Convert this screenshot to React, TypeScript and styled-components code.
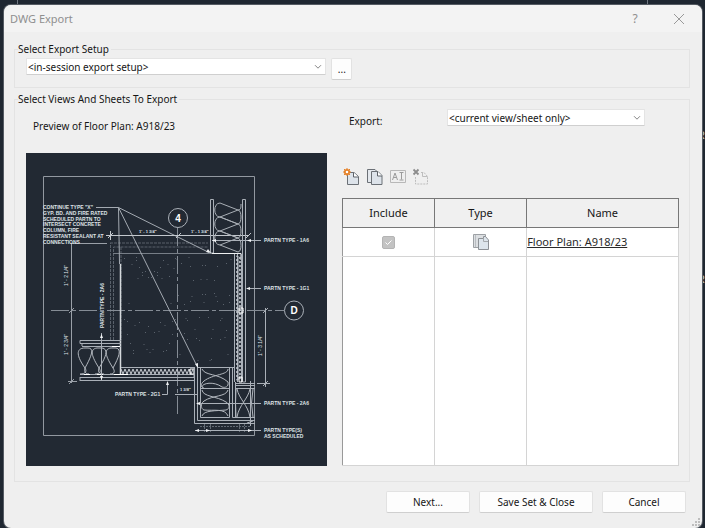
import React from "react";
import styled, { createGlobalStyle } from "styled-components";

const GlobalStyle = createGlobalStyle`
  *, *::before, *::after { box-sizing: border-box; }
  body {
    margin: 0;
    background: #1f2731;
    color: #161616;
    font-family: "Noto Sans", "Open Sans", sans-serif;
    font-size: 10px;
    line-height: 14px;
  }
  button, select { font: inherit; color: inherit; }
`;

const Desktop = styled.div`
  position: relative;
  display: flex;
  min-height: 100vh;
  padding: 5px 3px 2px 4px;
  overflow: hidden;
`;

const Backdrop = styled.svg`
  position: absolute;
  inset: 0;
  width: 100%;
  height: 100%;
`;

const Dialog = styled.main`
  position: relative;
  flex: 1;
  min-width: 0;
  display: flex;
  flex-direction: column;
  background: #efefef;
  border-radius: 7px;
  box-shadow: 0 0 0 1px #555b63;
  overflow: hidden;
`;

const TitleBar = styled.header`
  display: flex;
  align-items: center;
  height: 27px;
  padding: 0 15px 0 6px;
  background: #f3f3f3;
  color: #8f8f8f;
`;

const Title = styled.h1`
  flex: 1;
  margin: 0;
  font-size: 11px;
  font-weight: 400;
`;

const TitleButton = styled.button`
  display: grid;
  place-items: center;
  width: 16px;
  height: 20px;
  margin-left: 28px;
  padding: 0;
  border: 0;
  background: none;
  font-size: 12px;
`;

const Body = styled.form`
  flex: 1;
  display: flex;
  flex-direction: column;
  gap: 4px;
  padding: 10px 12px 15px 10px;
`;

const Group = styled.fieldset`
  min-width: 0;
  margin: 0;
  padding: 0 10px 0 3px;
  border: 1px solid #e3e3e3;
`;

const Legend = styled.legend`
  padding: 0 2px 0 0;
`;

const SetupRow = styled.div`
  display: flex;
  align-items: flex-start;
  gap: 5px;
  padding: 2px 0 7px 8px;
`;

const SelectBox = styled.span<{ $width: string }>`
  display: grid;
  width: ${(p) => p.$width};
  align-items: center;

  > * { grid-area: 1 / 1; }
  > svg { justify-self: end; margin-right: 4px; pointer-events: none; }
`;

const Select = styled.select`
  appearance: none;
  width: 100%;
  height: 17px;
  padding: 0 16px 0 1px;
  border: 1px solid #e4e4e4;
  border-bottom-color: #cfcfcf;
  border-radius: 1px;
  background: #fff;
`;

const Button = styled.button<{ $width: number }>`
  width: ${(p) => p.$width}px;
  height: 22px;
  padding: 0;
  border: 1px solid #e2e2e2;
  border-bottom-color: #cfcfcf;
  border-radius: 2px;
  background: #fdfdfd;
`;

const Columns = styled.div`
  display: grid;
  grid-template-columns: 301fr 337fr;
  gap: 15px;
  padding: 3px 0 15px 8px;
`;

const PreviewPane = styled.figure`
  margin: 0;
  min-width: 0;
`;

const PreviewCaption = styled.figcaption`
  padding: 10px 7px 20px;
`;

const Drawing = styled.svg`
  display: block;
  width: 100%;
  height: auto;
  background: #222933;
`;

const ViewsPane = styled.div`
  min-width: 0;
  display: flex;
  flex-direction: column;
`;

const ExportRow = styled.div`
  display: flex;
  align-items: flex-start;
  justify-content: space-between;
  padding: 0 34px 0 7px;

  > label { padding-top: 5px; }
`;

const ToolBar = styled.div`
  display: flex;
  gap: 5px;
  padding: 40px 0 12px 1px;
`;

const ToolButton = styled.button`
  width: 18px;
  height: 18px;
  padding: 0;
  border: 0;
  background: none;

  > svg { display: block; }
`;

const TableFrame = styled.div`
  flex: 1;
  display: flex;
`;

const Table = styled.table`
  flex: 1;
  table-layout: fixed;
  width: 100%;
  border-collapse: collapse;
  background: #fff;
  font-size: 11px;
`;

const HeadCell = styled.th<{ $width?: string }>`
  width: ${(p) => p.$width ?? "auto"};
  height: 29px;
  padding: 0;
  border: 1px solid #777;
  background: #f0f0f0;
  font-weight: 400;
`;

const Cell = styled.td<{ $align?: string; $fill?: boolean }>`
  height: ${(p) => (p.$fill ? "auto" : "29px")};
  padding: 0;
  border: 1px solid #d4d4d4;
  text-align: ${(p) => p.$align ?? "center"};
  vertical-align: middle;

  &:first-child { border-left-color: #999; }
  > svg { display: block; margin: 0 auto; }
`;

const Check = styled.input`
  appearance: none;
  display: block;
  width: 13px;
  height: 13px;
  margin: 0 auto;
  border: 1px solid #b4b4b4;
  border-radius: 2px;
  background: #c3c3c3 url("data:image/svg+xml,%3Csvg xmlns='http://www.w3.org/2000/svg' viewBox='0 0 11 11'%3E%3Cpath d='M2.5 5.5l2 2 4-4' fill='none' stroke='white'/%3E%3C/svg%3E");
`;

const ViewLink = styled.a`
  color: #2a2a2a;
  text-decoration: underline;
  text-underline-offset: 1px;
`;

const Footer = styled.footer`
  display: flex;
  justify-content: flex-end;
  gap: 9px;
  padding: 5px 4px 0 0;
`;

const Grip = styled.svg`
  position: absolute;
  right: 2px;
  bottom: 2px;
`;

const Chevron = () => (
  <svg width="8" height="6" viewBox="0 0 8 6" aria-hidden="true">
    <path d="M1 1.2l3 3 3-3" fill="none" stroke="#858585" />
  </svg>
);

const NewSetIcon = () => (
  <svg width="18" height="18" viewBox="0 0 18 18" aria-hidden="true">
    <path d="M4.500 4.500H11l4.500 4v8h-11z" fill="#dde3ea" stroke="#6b7076" />
    <path d="M10.500 4.500V9h5" fill="#fff" stroke="#5d6268" />
    <g stroke="#e5822a">
      <circle cx="4" cy="4" r="2.200" fill="#fff" strokeWidth="1.800" />
      <path d="M4 0v1.500M4 6.500V8M0 4h1.500M6.500 4H8M1 1l1 1M6 6l1 1M7 1L6 2M2 6L1 7" />
    </g>
  </svg>
);

const CopySetIcon = () => (
  <svg width="18" height="18" viewBox="0 0 18 18" aria-hidden="true">
    <path d="M5.500 14.500h-4v-13H9L11 3.500" fill="#e4e8ed" stroke="#6b7076" />
    <path d="M5.500 3.500H12l4 4v9H5.500z" fill="#dde3ea" stroke="#6b7076" />
    <path d="M11.500 3.500V8H16" fill="#fff" stroke="#5d6268" />
  </svg>
);

const RenameIcon = () => (
  <svg width="18" height="18" viewBox="0 0 18 18" aria-hidden="true" fill="none" stroke="#b8b8b8">
    <path d="M1.500 2.500h15v12h-15z" />
    <path d="M3.500 12l2.500-7 2.500 7M4.500 9.500h3M10.500 4.500h4M12.500 4.500v7M10.500 12h4" stroke="#9c9c9c" />
  </svg>
);

const DeleteSetIcon = () => (
  <svg width="18" height="18" viewBox="0 0 18 18" aria-hidden="true" fill="none" stroke="#bdbdbd">
    <path d="M9 4.500h3l3.500 4v7.500h-12V9" strokeDasharray="2 1" />
    <path d="M10.500 4.500V8.500h5" />
    <path d="M1.500 1.500l5 5M6.500 1.500l-5 5" stroke="#8c8c8c" strokeWidth="1.800" />
  </svg>
);

const SheetIcon = () => (
  <svg width="16" height="16" viewBox="0 0 16 16" aria-hidden="true">
    <path d="M.5.5h12v13H.5z" fill="#dcdfe2" stroke="#9da1a5" />
    <path d="M2.500 1v12" stroke="#b9bdc1" />
    <path d="M5.500 4.500h5v-2h2l3 3.500v9.500h-10z" fill="#dde5ec" stroke="#8d9196" />
    <path d="M10.500 4.500v3H15" fill="none" stroke="#a5a9ad" />
  </svg>
);

const speckles = Array.from({ length: 95 }, (_, i) => {
  const x = 124 + ((i * 67 + 13) % 108);
  const y = 258 + ((i * 41 + i * i * 3) % 106);
  return `M${x} ${y}l${(i % 3) - 1} ${i % 2 ? 1 : -1}`;
}).join("");

const battVertical = (x1: number, x2: number, top: number, bottom: number, step: number) => {
  let d = "";
  for (let y = top; y + step <= bottom + 1; y += step) {
    const mid = y + step / 2;
    const end = y + step;
    d += `M${x2 - 4} ${mid}L${x1 + 6} ${y}C${x1 - 1} ${y} ${x1 - 1} ${end} ${x1 + 6} ${end}L${x2 - 4} ${mid}`;
    if (end + step / 2 <= bottom + 1) {
      d += `C${x2} ${mid} ${x2} ${end + step / 2} ${x2 - 4} ${end + step / 2}L${x1 + 6} ${end}`;
    }
  }
  return d;
};

const zigzag = (length: number) =>
  Array.from({ length }, (_, i) => (i % 2 ? "l-5 2" : "l5 2")).join("");
const zigzagAcross = (length: number) =>
  Array.from({ length }, (_, i) => (i % 2 ? "l2 -5" : "l2 5")).join("");

const noteLines = [
  'CONTINUE TYPE "X"',
  "GYP. BD. AND FIRE RATED",
  "SCHEDULED PARTN TO",
  "INTERSECT CONCRETE",
  "COLUMN, FIRE",
  "RESISTANT SEALANT AT",
  "CONNECTIONS",
];

const FloorPlan = () => (
  <Drawing viewBox="26 153 301 313" role="img" aria-label="Floor plan preview">
    <g fill="none" stroke="#aab0b8" strokeWidth="1">
      <path d="M43.500 176.500H254.500V435.500H43.500z" stroke="#9298a0" />

      <path d={speckles} stroke="#5a626c" />
      <path d="M110.500 340V243M113.500 340V247H208M110 243H208M121 247V340" stroke="#59616b" strokeDasharray="3 1" />
      <path d="M113 253.500H212" stroke="#777e87" />

      <path d="M177.500 228V414" stroke="#858c95" strokeDasharray="18 3 4 3" />
      <path d="M51 310.500H284" stroke="#858c95" strokeDasharray="18 3 4 3" />
      <circle cx="178" cy="218" r="9.500" />
      <circle cx="294" cy="310.500" r="9.500" />

      <path d="M96 207.500H118.500L209 252.500M118.500 207.500L197.500 367M118.500 207.500L119.500 264" stroke="#a4aab2" />
      <path d="M106 235.500H249M108 238l5-5M176 238l5-5M246 238l5-5M110.500 231v9" stroke="#c3c8ce" />
      <path d="M72 243.500H107M71.500 243V383M68 381.500h9M69 313l5-5M69 384l5-5" stroke="#9aa0a8" />
      <path d="M265.500 308V387M257 383.500h13M263 313l5-5M263 386l5-5" />

      <path d="M120.500 264V374" stroke="#d5d9dd" strokeWidth="1.500" />
      <path d="M210.500 199.500h3V253h-3zM242.500 199.500h3V382h-3z" />
      <path d="M212 253.500H241V260" stroke="#eef0f2" />
      <path d={battVertical(214, 242, 203, 246, 14)} stroke="#a9afb6" />
      <path d="M238 210C241 210 241 207 241 204M238 238C242 239 242 252 238 252L220 245" stroke="#a9afb6" />

      <path d="M234.500 254V382M241.500 254V382M237.500 254V382" />
      <path d={`M236 256${zigzag(62)}`} stroke="#bfc4ca" />
      <path d="M239 308h4v5h-4zM239 377h3v5h-3z" stroke="#fff" />

      <path d="M121 367.500H195M121 374.500H195M80 377.500H194M80 380.500H194" />
      <path d={`M121 369${zigzagAcross(36)}`} stroke="#c6cad0" />
      <path d="M190 369h4v5h-4z" stroke="#fff" />

      <path d="M121 340.500H80v3H121M82 346.500H121M80 374.500H128M80 377v4M82 343v3" />
      <path d="M85 348C75 348 77 357 85 368C87 371 86 374 80 374M85 348H88C95 348 91 357 85 368C84 371 85 374 89 374M97 348C89 349 92 357 99 368C101 371 101 374 95 374M97 348H102C109 349 106 357 99 368C98 371 98 374 104 374M111 348C103 349 106 357 113 368C115 371 115 374 110 374M111 348H116C122 349 119 357 113 368" stroke="#b3b8bf" />
      <path d="M112 346.500h8M114 374.500h14M84 374.500h6M97 374.500h6" stroke="#fff" />
      <path d="M101.500 333V381" />

      <path d="M194.500 368V423.500H255M197.500 368V420.500H255M197 367.500H234M200.500 368V417.500H229.500V368M200 388.500H229.500M232.500 368V417.500H255M235.500 382V417" />
      <path d="M235 383.500H255M235 385.500H255M235 388.500H255M250.500 381V426M247 423l6-2" />
      <g stroke="#b3b8bf">
        <path d="M202 369C205 376 218 373 228 382C229 387 225 388 222 387C214 381 202 383 202 387M228 369C228 375 213 374 204 381C200 384 201 388 204 388" />
        <path d="M202 390C203 397 217 396 226 402C230 404 230 409 226 410C216 411 204 410 202 416M228 390C226 397 213 395 204 401C200 404 201 409 204 410C214 411 225 408 228 416" />
        <path d="M237 389C239 399 248 405 250 417M250 389C248 399 239 405 237 417" />
        <path d="M236 389q-1 14 0 28M253 389q-3 14 0 28" />
      </g>
      <path d="M204.500 424v9M210.500 424v9M239.500 424v9M244.500 424v9M200 426.500H250" stroke="#626a74" strokeDasharray="2 1" />

      <path d="M212 240.500H261M247 288.500H261M197 403.500H261M195 430.500H261M162 394.500h5.500V383M175 394.500h23" />
      <path d="M194 368V378" />
    </g>

    <g fill="#f0f2f4">
      <path d="M212 240.500l4-1.500v3zM247 240.500l4-1.500v3zM246 288.500l4-1.500v3zM196 403.500l4-1.500v3zM195 430.500l4-1.500v3zM210 430.500l-4-1.500v3zM252 430.500l-4-1.500v3zM167.500 381l-1.500 4h3zM101.500 334l-1.500 4h3zM101.500 380l-1.500-4h3zM211 253l-5-1 2-3zM198 368l-3-4 3-1z" />
    </g>

    <g fill="#dfe2e6" fontFamily="Liberation Sans, sans-serif" fontSize="5" fontWeight="700">
      {noteLines.map((line, i) => (
        <text key={line} x="43" y={209 + Math.round(i * 5.8)}>{line}</text>
      ))}
      <text x="264" y="242">PARTN TYPE - 1A6</text>
      <text x="264" y="290">PARTN TYPE - 1G1</text>
      <text x="264" y="405">PARTN TYPE - 2A6</text>
      <text x="264" y="432">PARTN TYPE(S)</text>
      <text x="264" y="438">AS SCHEDULED</text>
      <text x="115" y="396">PARTN TYPE - 2G1</text>
      <text transform="translate(104 328) rotate(-90)">PARTN TYPE - 2A6</text>
      <g fontSize="4">
        <text x="139" y="233">1&#39; - 1 3/4&quot;</text>
        <text x="191" y="233">1&#39; - 1 3/4&quot;</text>
        <text x="180" y="391">1 3/8&quot;</text>
      </g>
      <g fontWeight="400">
        <text transform="translate(68 286) rotate(-90)">1&#39; - 2 1/4&quot;</text>
        <text transform="translate(68 355) rotate(-90)">1&#39; - 2 3/4&quot;</text>
        <text transform="translate(262 356) rotate(-90)">1&#39; - 3 1/4&quot;</text>
      </g>
      <g fontSize="10" textAnchor="middle" fill="#fff">
        <text x="178" y="222">4</text>
        <text x="294" y="314">D</text>
      </g>
    </g>
  </Drawing>
);

export default function App() {
  return (
    <Desktop>
      <GlobalStyle />
      <Backdrop aria-hidden="true">
        <path d="M17.500 0v6M647.500 0v6" stroke="#6f7680" />
        <path d="M245 527.500h240M565 527.500h60" stroke="#a3a9b0" strokeDasharray="3 2" />
        <g fill="#c9cdd2" fontFamily="Liberation Sans, sans-serif" fontSize="11">
          <text x="697" y="139">R</text>
          <text x="697" y="283">R</text>
        </g>
      </Backdrop>
      <Dialog>
        <TitleBar>
          <Title>DWG Export</Title>
          <TitleButton type="button" aria-label="Help">?</TitleButton>
          <TitleButton type="button" aria-label="Close">
            <svg width="12" height="12" viewBox="0 0 12 12" aria-hidden="true">
              <path d="M1 1l10 10M11 1L1 11" stroke="#999" />
            </svg>
          </TitleButton>
        </TitleBar>
        <Body onSubmit={(e) => e.preventDefault()}>
          <Group>
            <Legend>Select Export Setup</Legend>
            <SetupRow>
              <SelectBox $width="46%">
                <Select aria-label="Export setup">
                  <option>&lt;in-session export setup&gt;</option>
                </Select>
                <Chevron />
              </SelectBox>
              <Button type="button" $width={21} aria-label="Modify export setup">...</Button>
            </SetupRow>
          </Group>
          <Group>
            <Legend>Select Views And Sheets To Export</Legend>
            <Columns>
              <PreviewPane>
                <PreviewCaption>Preview of Floor Plan: A918/23</PreviewCaption>
                <FloorPlan />
              </PreviewPane>
              <ViewsPane>
                <ExportRow>
                  <label htmlFor="export-scope">Export:</label>
                  <SelectBox $width="198px">
                    <Select id="export-scope">
                      <option>&lt;current view/sheet only&gt;</option>
                    </Select>
                    <Chevron />
                  </SelectBox>
                </ExportRow>
                <ToolBar>
                  <ToolButton type="button" aria-label="New set"><NewSetIcon /></ToolButton>
                  <ToolButton type="button" aria-label="Duplicate set"><CopySetIcon /></ToolButton>
                  <ToolButton type="button" aria-label="Rename set" disabled><RenameIcon /></ToolButton>
                  <ToolButton type="button" aria-label="Delete set" disabled><DeleteSetIcon /></ToolButton>
                </ToolBar>
                <TableFrame>
                  <Table>
                    <thead>
                      <tr>
                        <HeadCell $width="27.4%">Include</HeadCell>
                        <HeadCell $width="27.4%">Type</HeadCell>
                        <HeadCell>Name</HeadCell>
                      </tr>
                    </thead>
                    <tbody>
                      <tr>
                        <Cell><Check type="checkbox" aria-label="Include Floor Plan: A918/23" defaultChecked disabled /></Cell>
                        <Cell><SheetIcon /></Cell>
                        <Cell $align="left"><ViewLink href="#a918-23">Floor Plan: A918/23</ViewLink></Cell>
                      </tr>
                      <tr>
                        <Cell $fill /><Cell $fill /><Cell $fill />
                      </tr>
                    </tbody>
                  </Table>
                </TableFrame>
              </ViewsPane>
            </Columns>
          </Group>
          <Footer>
            <Button type="button" $width={84}>Next...</Button>
            <Button type="submit" $width={114}>Save Set &amp; Close</Button>
            <Button type="button" $width={84}>Cancel</Button>
          </Footer>
        </Body>
        <Grip width="8" height="8" viewBox="0 0 8 8" aria-hidden="true">
          <path d="M6 0h2v2H6zM3 3h2v2H3zM6 3h2v2H6zM0 6h2v2H0zM3 6h2v2H3zM6 6h2v2H6z" fill="#bdbdbd" />
        </Grip>
      </Dialog>
    </Desktop>
  );
}
